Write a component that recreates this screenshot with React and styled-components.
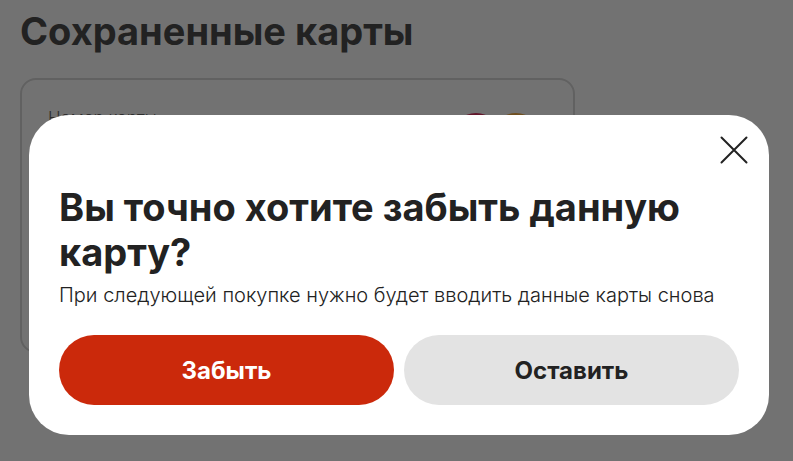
import React from "react";
import styled, { createGlobalStyle } from "styled-components";

const GlobalStyle = createGlobalStyle`
  * { box-sizing: border-box; }
  html, body, #root { height: 100%; }
  body {
    margin: 0;
    background: #fff;
    color: #222;
    font-family: Inter, "Liberation Sans", sans-serif;
    overflow: hidden;
  }
`;

const Page = styled.main`
  padding: 8px 20px 0;
`;

const PageTitle = styled.h1`
  margin: 0 0 24px;
  font-size: 38px;
  line-height: 46px;
  font-weight: 700;
`;

const SavedCard = styled.section`
  display: flex;
  justify-content: space-between;
  align-items: flex-start;
  max-width: 555px;
  min-height: 275px;
  padding: 28px 26px;
  border: 2px solid #d0d0d0;
  border-radius: 16px;
`;

const CardLabel = styled.span`
  color: #444;
  font-size: 17px;
  line-height: 20px;
  font-weight: 300;
`;

const BrandMark = styled.svg`
  width: 90px;
  height: 50px;
  margin: 4px 6px 0 0;
`;

const Overlay = styled.div`
  position: fixed;
  inset: 0;
  display: flex;
  align-items: flex-end;
  padding: 0 24px 26px 29px;
  background: rgba(34, 34, 34, 0.64);
`;

const Dialog = styled.div`
  position: relative;
  width: 100%;
  padding: 70px 30px 30px;
  border-radius: 40px;
  background: #fff;
`;

const CloseButton = styled.button`
  position: absolute;
  top: 20px;
  right: 20px;
  display: flex;
  padding: 0;
  border: 0;
  background: none;
  color: #222;
  cursor: pointer;
`;

const DialogTitle = styled.h2`
  margin: 0;
  font-size: 38px;
  line-height: 45px;
  font-weight: 700;
`;

const DialogText = styled.p`
  margin: 7px 0 26px;
  font-size: 20px;
  line-height: 27px;
  font-weight: 300;
`;

const Actions = styled.div`
  display: grid;
  grid-template-columns: 1fr 1fr;
  gap: 10px;
`;

const ActionButton = styled.button`
  height: 70px;
  border: 0;
  border-radius: 35px;
  background: ${({ $primary }) => ($primary ? "#cb290b" : "#e3e3e3")};
  color: ${({ $primary }) => ($primary ? "#fff" : "#222")};
  font: inherit;
  font-size: 24px;
  font-weight: 700;
  cursor: pointer;
`;

export default function App() {
  return (
    <>
      <GlobalStyle />
      <Page>
        <PageTitle>Сохраненные карты</PageTitle>
        <SavedCard>
          <CardLabel>Номер карты</CardLabel>
          <BrandMark viewBox="0 0 90 50" aria-hidden="true">
            <circle cx="25" cy="25" r="24" fill="#d6003c" />
            <circle cx="65" cy="25" r="24" fill="#f79e1b" />
          </BrandMark>
        </SavedCard>
      </Page>
      <Overlay>
        <Dialog role="dialog" aria-modal="true" aria-labelledby="dialog-title">
          <CloseButton type="button" aria-label="Закрыть">
            <svg width="30" height="30" viewBox="0 0 30 30" fill="none" stroke="currentColor" strokeWidth="2" strokeLinecap="round">
              <path d="M2.5 2.5 27.5 27.5M27.5 2.5 2.5 27.5" />
            </svg>
          </CloseButton>
          <DialogTitle id="dialog-title">Вы точно хотите забыть данную карту?</DialogTitle>
          <DialogText>При следующей покупке нужно будет вводить данные карты снова</DialogText>
          <Actions>
            <ActionButton type="button" $primary>Забыть</ActionButton>
            <ActionButton type="button">Оставить</ActionButton>
          </Actions>
        </Dialog>
      </Overlay>
    </>
  );
}
